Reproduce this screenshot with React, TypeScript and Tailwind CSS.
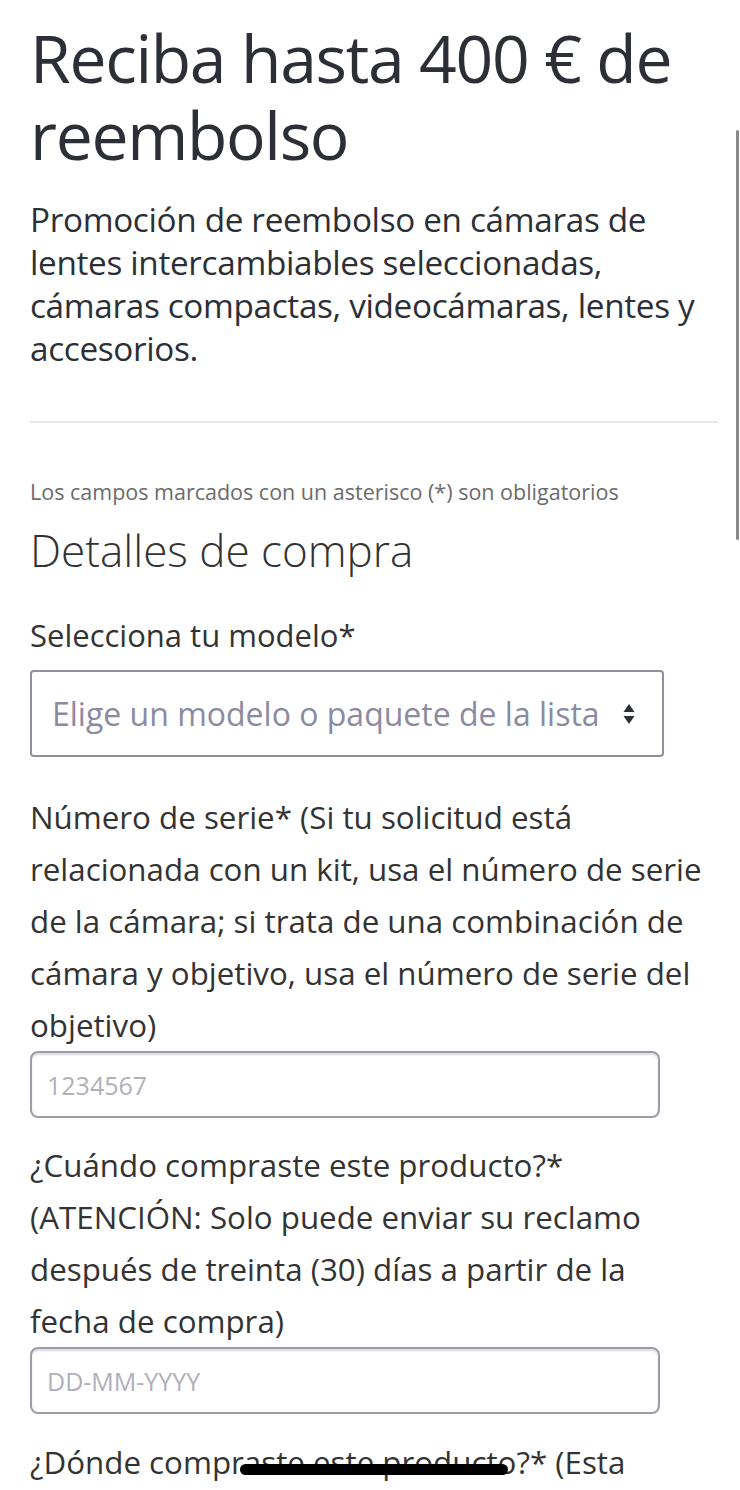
import React from "react"

const font = { fontFamily: '"Open Sans", "Noto Sans", sans-serif' }

function Lines({ lines }: { lines: string[] }) {
  return (
    <>
      {lines.map((l, i) => (
        <React.Fragment key={i}>
          {i > 0 && <br />}
          {l}
        </React.Fragment>
      ))}
    </>
  )
}

function Field({ lines, placeholder }: { lines: string[]; placeholder: string }) {
  return (
    <div>
      <label className="block whitespace-nowrap text-[31.3px] leading-[52px] text-[#333]">
        <Lines lines={lines} />
      </label>
      <input
        type="text"
        placeholder={placeholder}
        className="block w-[630px] h-[67px] rounded-[8px] border-2 border-[#9c9baa] px-[15px] text-[25px] text-[#333] placeholder:text-[#b0afba] shadow-[inset_0_2px_2px_rgba(60,60,80,0.18)] outline-none"
      />
    </div>
  )
}

export default function App() {
  return (
    <div className="relative min-h-[1490px] bg-white overflow-hidden" style={font}>
      <main className="pl-[30px] pr-[22px] pt-[19px] pb-10">
        <h1 className="text-[66px] leading-[77px] text-[#2c2f36] tracking-[-0.02em]">
          Reciba hasta 400 € de reembolso
        </h1>
        <p className="mt-[25px] whitespace-nowrap text-[33.3px] leading-[43px] text-[#2c2f36] tracking-[-0.01em]">
          <Lines
            lines={[
              "Promoción de reembolso en cámaras de",
              "lentes intercambiables seleccionadas,",
              "cámaras compactas, videocámaras, lentes y",
              "accesorios.",
            ]}
          />
        </p>

        <hr className="mt-[51px] w-[688px] border-0 border-t-2 border-[#e6e6e6]" />

        <p className="mt-[56px] text-[21.5px] leading-[26px] text-[#6b6b6b]">
          Los campos marcados con un asterisco (*) son obligatorios
        </p>
        <h2 className="mt-[17px] text-[44px] leading-[56px] font-light text-[#333]">Detalles de compra</h2>

        <div className="mt-[37px]">
          <label className="block text-[31px] leading-[40px] text-[#333]">Selecciona tu modelo*</label>
          <div className="mt-[15px] flex h-[87px] w-[634px] items-center justify-between rounded-[4px] border-2 border-[#8f8e9b] pl-[20px] pr-[27px]">
            <span className="text-[32px] text-[#8b8aa3]">Elige un modelo o paquete de la lista</span>
            <svg width="12" height="22" viewBox="0 0 12 22" fill="#2c2f36">
              <path d="M6 1 L11.5 9 H0.5 Z" />
              <path d="M6 21 L11.5 13 H0.5 Z" />
            </svg>
          </div>
        </div>

        <div className="mt-[34px]">
          <Field
            lines={[
              "Número de serie* (Si tu solicitud está",
              "relacionada con un kit, usa el número de serie",
              "de la cámara; si trata de una combinación de",
              "cámara y objetivo, usa el número de serie del",
              "objetivo)",
            ]}
            placeholder="1234567"
          />
        </div>
        <div className="mt-[21px]">
          <Field
            lines={[
              "¿Cuándo compraste este producto?*",
              "(ATENCIÓN: Solo puede enviar su reclamo",
              "después de treinta (30) días a partir de la",
              "fecha de compra)",
            ]}
            placeholder="DD-MM-YYYY"
          />
        </div>
        <p className="mt-[22px] whitespace-nowrap text-[31.3px] leading-[52px] text-[#333]">
          ¿Dónde compraste este producto?* (Esta
        </p>
      </main>

      {/* scroll indicator */}
      <div className="absolute right-[1px] top-[130px] h-[410px] w-[3px] rounded-full bg-[#8a8a8a]" />
      {/* home indicator */}
      <div className="absolute left-[240px] top-[1464px] h-[11px] w-[268px] rounded-full bg-black" />
    </div>
  )
}
